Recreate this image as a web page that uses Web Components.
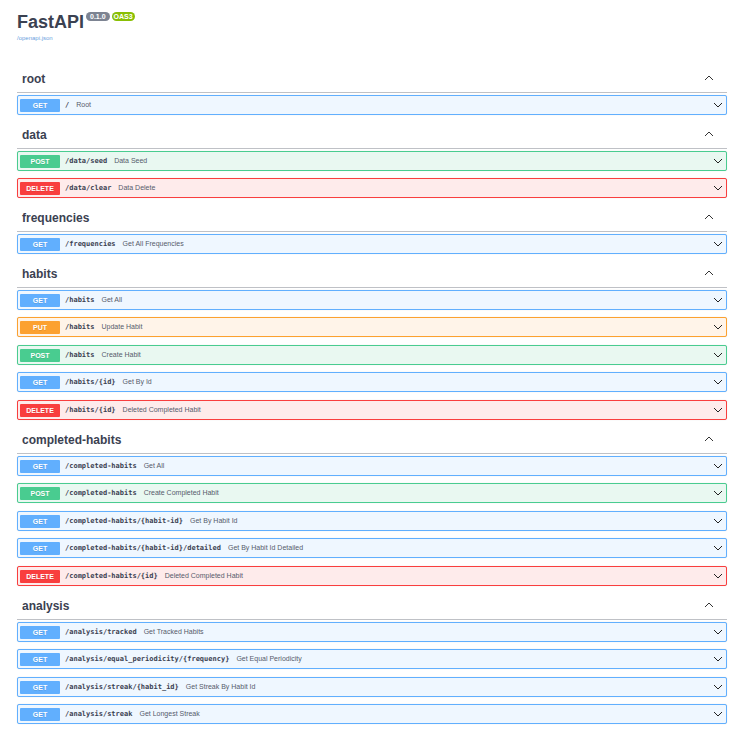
<!DOCTYPE html>
<html lang="en">
<head>
<meta charset="utf-8">
<title>FastAPI - Swagger UI</title>
<style>
body { margin: 0; background: #fff; color: #3b4151; font-family: "Liberation Sans", Arial, sans-serif; }
</style>
</head>
<body>
<api-page>
  <api-info slot="info" name="FastAPI" version="0.1.0" spec="OAS3" href="/openapi.json"></api-info>
  <api-section name="root">
    <api-operation method="get" path="/">Root</api-operation>
  </api-section>
  <api-section name="data">
    <api-operation method="post" path="/data/seed">Data Seed</api-operation>
    <api-operation method="delete" path="/data/clear">Data Delete</api-operation>
  </api-section>
  <api-section name="frequencies">
    <api-operation method="get" path="/frequencies">Get All Frequencies</api-operation>
  </api-section>
  <api-section name="habits">
    <api-operation method="get" path="/habits">Get All</api-operation>
    <api-operation method="put" path="/habits">Update Habit</api-operation>
    <api-operation method="post" path="/habits">Create Habit</api-operation>
    <api-operation method="get" path="/habits/{id}">Get By Id</api-operation>
    <api-operation method="delete" path="/habits/{id}">Deleted Completed Habit</api-operation>
  </api-section>
  <api-section name="completed-habits">
    <api-operation method="get" path="/completed-habits">Get All</api-operation>
    <api-operation method="post" path="/completed-habits">Create Completed Habit</api-operation>
    <api-operation method="get" path="/completed-habits/{habit-id}">Get By Habit Id</api-operation>
    <api-operation method="get" path="/completed-habits/{habit-id}/detailed">Get By Habit Id Detailed</api-operation>
    <api-operation method="delete" path="/completed-habits/{id}">Deleted Completed Habit</api-operation>
  </api-section>
  <api-section name="analysis">
    <api-operation method="get" path="/analysis/tracked">Get Tracked Habits</api-operation>
    <api-operation method="get" path="/analysis/equal_periodicity/{frequency}">Get Equal Periodicity</api-operation>
    <api-operation method="get" path="/analysis/streak/{habit_id}">Get Streak By Habit Id</api-operation>
    <api-operation method="get" path="/analysis/streak">Get Longest Streak</api-operation>
  </api-section>
</api-page>

<template id="page-template">
  <style>
    :host { display: block; padding: 12px 12px 13px 17px; }
    header { height: 47px; }
  </style>
  <header><slot name="info"></slot></header>
  <main><slot></slot></main>
</template>

<template id="info-template">
  <style>
    :host { display: block; }
    .title { display: flex; align-items: flex-start; gap: 2px; }
    h1 { margin: 0; font-size: 18px; line-height: 20px; font-weight: 700; }
    .tag { height: 9px; padding: 0 4px; border-radius: 5px; background: #7d8492; color: #fff; font-size: 7px; line-height: 9px; font-weight: 700; }
    .spec { background: #89bf04; padding: 0 2px; }
    a { display: block; width: max-content; margin-top: 2px; color: #6b9fe0; font-size: 6px; line-height: 8px; text-decoration: none; }
  </style>
  <div class="title"><h1></h1><span class="tag version"></span><span class="tag spec"></span></div>
  <a></a>
</template>

<template id="section-template">
  <style>
    :host { display: block; }
    h2 { margin: 0 0 2px; border-bottom: 1px solid #bfc1c6; }
    button { display: flex; align-items: center; justify-content: space-between; width: 100%; height: 33px; border: 0; padding: 7px 13px 0 5px; background: none; color: inherit; font: 700 12px/16px "Liberation Sans", Arial, sans-serif; text-align: left; cursor: pointer; }
    svg { display: block; width: 10px; height: 10px; fill: none; stroke: #333; stroke-width: 1; }
    ::slotted(:nth-child(even)) { margin-top: 7px; }
    ::slotted(:nth-child(odd):not(:first-child)) { margin-top: 8px; }
    [hidden] { display: none; }
  </style>
  <section>
    <h2><button type="button" aria-expanded="true"><span></span><svg viewBox="0 0 10 10" aria-hidden="true"><path d="M1 6 5 2 9 6"/></svg></button></h2>
    <div class="list"><slot></slot></div>
  </section>
</template>

<template id="operation-template">
  <style>
    :host { display: block; --tone: #61affe; --wash: #eff7ff; }
    :host([method="post"]) { --tone: #49cc90; --wash: #e9f8f1; }
    :host([method="put"]) { --tone: #fca130; --wash: #fff4e9; }
    :host([method="delete"]) { --tone: #f93e3e; --wash: #feebeb; }
    button { box-sizing: border-box; display: flex; align-items: center; width: 100%; height: 20px; border: 1px solid var(--tone); border-radius: 2px; padding: 0 3px 0 2px; background: var(--wash); box-shadow: 0 0 1px rgba(0, 0, 0, .19); color: #3b4151; font-family: inherit; text-align: left; cursor: pointer; }
    .method { width: 40px; height: 13px; border-radius: 1px; background: var(--tone); color: #fff; font-size: 7px; line-height: 13px; font-weight: 700; text-align: center; text-transform: uppercase; text-shadow: 0 1px 0 rgba(0, 0, 0, .1); }
    .path { margin: 0 7px 0 5px; font: 700 7px/12px "DejaVu Sans Mono", "Liberation Mono", monospace; white-space: nowrap; }
    .summary { flex: 1; color: #565b6b; font-size: 7px; line-height: 12px; white-space: nowrap; }
    svg { display: block; width: 10px; height: 10px; fill: none; stroke: #222; stroke-width: 1; }
  </style>
  <button type="button" aria-expanded="false"><span class="method"></span><span class="path"></span><span class="summary"><slot></slot></span><svg viewBox="0 0 10 10" aria-hidden="true"><path d="M1 3 5 7 9 3"/></svg></button>
</template>

<script>
function render(host, id) {
  const root = host.attachShadow({ mode: "open" });
  root.append(document.getElementById(id).content.cloneNode(true));
  return root;
}
customElements.define("api-page", class extends HTMLElement {
  constructor() { super(); render(this, "page-template"); }
});
customElements.define("api-info", class extends HTMLElement {
  constructor() {
    super();
    const root = render(this, "info-template");
    root.querySelector("h1").textContent = this.getAttribute("name");
    root.querySelector(".version").textContent = this.getAttribute("version");
    root.querySelector(".spec").textContent = this.getAttribute("spec");
    const link = root.querySelector("a");
    link.href = this.getAttribute("href");
    link.textContent = this.getAttribute("href");
  }
});
customElements.define("api-section", class extends HTMLElement {
  constructor() {
    super();
    const root = render(this, "section-template");
    root.querySelector("span").textContent = this.getAttribute("name");
    const button = root.querySelector("button");
    const list = root.querySelector(".list");
    button.addEventListener("click", () => {
      list.hidden = !list.hidden;
      button.setAttribute("aria-expanded", String(!list.hidden));
    });
  }
});
customElements.define("api-operation", class extends HTMLElement {
  constructor() {
    super();
    const root = render(this, "operation-template");
    root.querySelector(".method").textContent = this.getAttribute("method");
    root.querySelector(".path").textContent = this.getAttribute("path");
  }
});
</script>
</body>
</html>
